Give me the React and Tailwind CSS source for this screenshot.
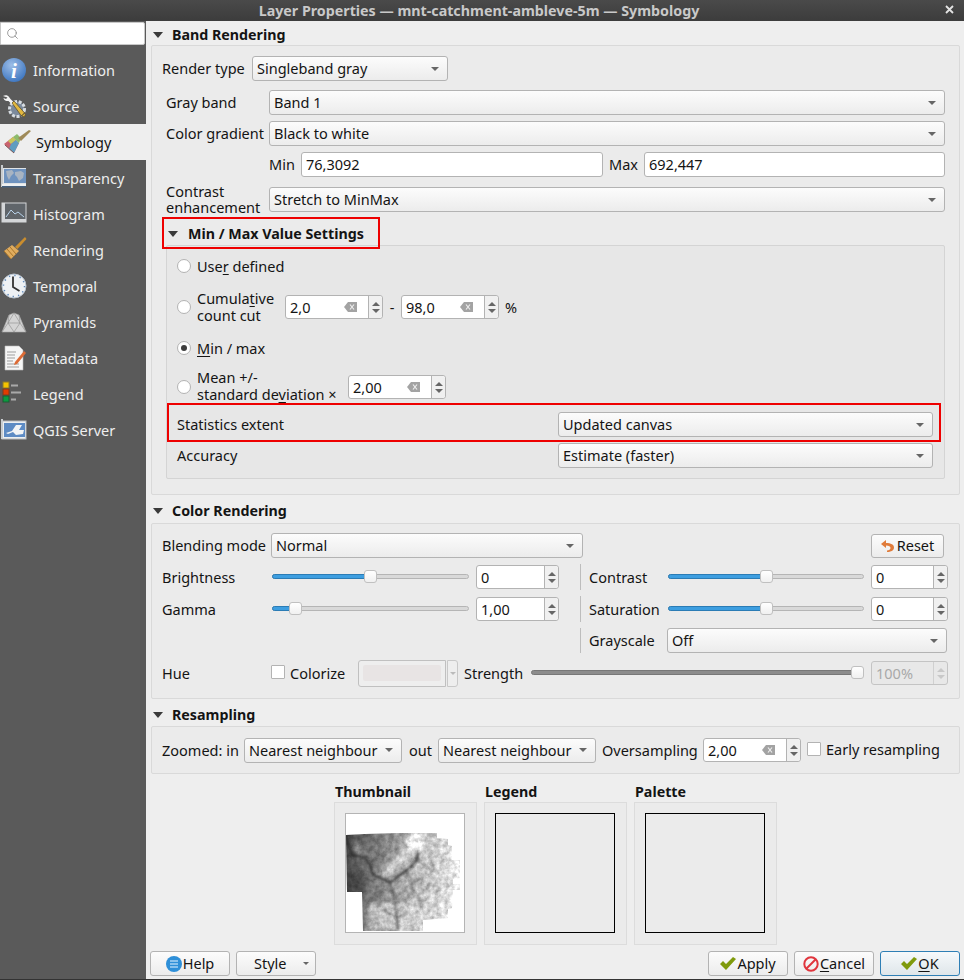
import { Search } from "lucide-react";

// ── Sidebar icons ─────────────────────────────────────
const InfoIcon = () => (
  <svg width="26" height="26" viewBox="0 0 26 26">
    <defs>
      <radialGradient id="infoBg" cx="0.4" cy="0.3" r="0.8">
        <stop offset="0" stopColor="#9dbde6" />
        <stop offset="1" stopColor="#3570bd" />
      </radialGradient>
    </defs>
    <circle cx="13" cy="13" r="12" fill="url(#infoBg)" />
    <text x="13" y="21" textAnchor="middle" fill="#fff" fontSize="21" fontWeight="700" fontStyle="italic" fontFamily="Liberation Serif, serif">i</text>
  </svg>
);

const SourceIcon = () => (
  <svg width="26" height="26" viewBox="0 0 26 26">
    <circle cx="16" cy="16" r="7.5" fill="#7c8a9c" stroke="#d8dde2" strokeWidth="3" strokeDasharray="3 1.6" />
    <path d="M2 3c2-1.500 5-1 6 1l1.500 2 4 4-2 2-4-4-2 0c-2-.5-3-2-3-3l2.500 1 1.500-1.500z" fill="#f4f4f4" />
    <path d="M11 10l2-2 11.500 13-1 3-3-1z" fill="#e3b83f" stroke="#5d5230" strokeWidth=".8" />
    <path d="M20.500 23l3-3" stroke="#333" strokeWidth="1" />
  </svg>
);

const SymbologyIcon = () => (
  <svg width="28" height="24" viewBox="0 0 28 24">
    <path d="M1 14l9-7 6 6-5 10z" fill="#c9626d" />
    <path d="M5 11l5-4 3 3-5 4z" fill="#c7c75a" />
    <path d="M8 14l5-4 3 3-5 10-5-4z" fill="#5f9dc0" />
    <path d="M10 7l4-3 4 4-2 5z" fill="#8dbb6d" />
    <path d="M15 8L26 0l2 1-10 10z" fill="#9f8a58" />
    <path d="M2 15l9 8" stroke="#7d5a5a" strokeWidth="1" />
  </svg>
);

const TransparencyIcon = () => (
  <svg width="26" height="26" viewBox="0 0 26 26">
    <rect x="1" y="3" width="24" height="18" fill="#dfe3e6" />
    <rect x="3" y="4" width="22" height="14" fill="#6f93bf" />
    <path d="M5 6l6-1 2 3-3 3-2 4-2-4zM14 7l6-1 3 2-1 5-4 3-2-4-2-2z" fill="#a8b4c2" />
    <rect x="0" y="0" width="2" height="22" fill="#c9cdd0" />
    <rect x="1" y="19" width="24" height="2" fill="#eef0f1" />
    <rect x="1" y="21" width="24" height="1.500" fill="#44607f" />
  </svg>
);

const HistogramIcon = () => (
  <svg width="26" height="26" viewBox="0 0 26 26">
    <rect x="1" y="2" width="24" height="19" fill="#60656a" stroke="#d4d6d8" />
    <rect x="1" y="2" width="3" height="19" fill="#d4d6d8" />
    <rect x="1" y="18" width="24" height="3" fill="#d4d6d8" />
    <path d="M5 16l5-7 4 4 3-2 6 5" fill="none" stroke="#b9d4ec" strokeWidth="1" />
  </svg>
);

const RenderingIcon = () => (
  <svg width="26" height="26" viewBox="0 0 26 26">
    <path d="M14 10L24 0l1.500 2-9 10z" fill="#c98d2e" />
    <path d="M3 14l8-6 7 6-8 8z" fill="#e0ac5e" />
    <path d="M3 14l7 8M6 12l7 8M9 10l6 7" stroke="#a8752a" strokeWidth="1" />
  </svg>
);

const TemporalIcon = () => (
  <svg width="26" height="26" viewBox="0 0 26 26">
    <circle cx="13" cy="13" r="12" fill="#eef1f4" stroke="#b9c4d0" />
    <circle cx="13" cy="13" r="10.500" fill="none" stroke="#5b86b8" strokeWidth="1.400" strokeDasharray="1.300 4.200" />
    <path d="M12 3.500v10.500l6.500 4" fill="none" stroke="#333" strokeWidth="1.800" />
  </svg>
);

const PyramidsIcon = () => (
  <svg width="26" height="26" viewBox="0 0 26 26">
    <path d="M1 23L8 6l5-2 5 2 7 17z" fill="#d4d4d4" stroke="#aaa" strokeWidth=".6" />
    <path d="M8 6l-1 8 6-10 6 10-1-8M1 23l6-9 6 9 6-9 6 9M7 14h12" fill="none" stroke="#8c8c8c" strokeWidth=".6" />
  </svg>
);

const MetadataIcon = () => (
  <svg width="26" height="26" viewBox="0 0 26 26">
    <path d="M4 1h14l4 4v20H4z" fill="#f6f6f6" stroke="#bbb" strokeWidth=".6" />
    <path d="M6 7h9M6 10h8M6 13h8M6 16h6M6 19h12M6 22h12" stroke="#9d9d9d" strokeWidth="1" />
    <path d="M14 17l9-11 2 2-9 11-3 1z" fill="#dd6b35" />
  </svg>
);

const LegendIcon = () => (
  <svg width="26" height="26" viewBox="0 0 26 26">
    <rect x="2" y="1" width="6" height="6" fill="#f5c400" stroke="#8c7a2a" />
    <rect x="2" y="8" width="6" height="6" fill="#e23c00" stroke="#7e3a1a" />
    <rect x="2" y="15" width="6" height="6" fill="#0a9b40" stroke="#1d5a33" />
    <path d="M10 4.500h7M10 11.500h10M10 18.500h5" stroke="#a9a9a9" strokeWidth="2" />
  </svg>
);

const ServerIcon = () => (
  <svg width="26" height="26" viewBox="0 0 26 26">
    <rect x="1" y="4" width="24" height="18" fill="#eceff1" stroke="#b7babd" />
    <rect x="3" y="6" width="21" height="14" fill="#5d8bc4" />
    <path d="M5 16l6-2 4-6h6l-3 5 5 0-1 4-7 1-3-3-5 2z" fill="#f2f4f6" />
    <rect x="0" y="2" width="2" height="20" fill="#c9cdd0" />
  </svg>
);

const navItems = [
  ["Information", InfoIcon],
  ["Source", SourceIcon],
  ["Symbology", SymbologyIcon],
  ["Transparency", TransparencyIcon],
  ["Histogram", HistogramIcon],
  ["Rendering", RenderingIcon],
  ["Temporal", TemporalIcon],
  ["Pyramids", PyramidsIcon],
  ["Metadata", MetadataIcon],
  ["Legend", LegendIcon],
  ["QGIS Server", ServerIcon],
];

// ── Small form widgets ────────────────────────────────
const Caret = () => (
  <span className="w-0 h-0 border-x-[4px] border-x-transparent border-t-[4px] border-t-[#666] shrink-0" />
);

const Combo = ({ value, className = "" }) => (
  <div className={`flex items-center justify-between h-[25px] pl-[4px] pr-[8px] border border-[#b3b3b3] rounded-[3px] bg-gradient-to-b from-[#fcfcfc] to-[#ececec] shrink-0 ${className}`}>
    <span className="whitespace-nowrap">{value}</span>
    <Caret />
  </div>
);

const TextInput = ({ value, className = "" }) => (
  <div className={`flex items-center h-[25px] pl-[4px] border border-[#b3b3b3] rounded-[3px] bg-white shrink-0 ${className}`}>
    {value}
  </div>
);

const ClearIcon = () => (
  <svg width="13" height="10" viewBox="0 0 13 10" className="shrink-0">
    <path d="M4 0h9v10H4L0 5z" fill="#a3a3a3" />
    <path d="M6 2.500l4 5M10 2.500l-4 5" stroke="#eee" strokeWidth="1.200" />
  </svg>
);

const Spin = ({ value, clear, disabled, className = "" }) => (
  <div className={`flex items-stretch h-[24px] border rounded-[3px] shrink-0 ${disabled ? "border-[#c4c4c4] bg-[#e8e8e8] text-[#a8a8a8]" : "border-[#b3b3b3] bg-white"} ${className}`}>
    <div className="flex-1 flex items-center justify-between pl-[4px] pr-[11px]">
      <span>{value}</span>
      {clear && <ClearIcon />}
    </div>
    <div className={`w-[14px] flex flex-col items-center justify-center gap-[3px] border-l rounded-r-[3px] ${disabled ? "border-[#d0d0d0]" : "border-[#b3b3b3] bg-[#f0f0f0]"}`}>
      <span className={`w-0 h-0 border-x-[4px] border-x-transparent border-b-[4px] ${disabled ? "border-b-[#c8c8c8]" : "border-b-[#666]"}`} />
      <span className={`w-0 h-0 border-x-[4px] border-x-transparent border-t-[4px] ${disabled ? "border-t-[#c8c8c8]" : "border-t-[#666]"}`} />
    </div>
  </div>
);

const Radio = ({ checked }) => (
  <span className="flex items-center justify-center w-[14px] h-[14px] rounded-full border border-[#b3b3b3] bg-white shrink-0">
    {checked && <span className="w-[6px] h-[6px] rounded-full bg-[#3d3d3d]" />}
  </span>
);

const Checkbox = ({ className = "" }) => (
  <span className={`block w-[14px] h-[14px] border border-[#b3b3b3] rounded-[1px] bg-white shrink-0 ${className}`} />
);

const Slider = ({ handle, width, dark }) => (
  <div className={`relative h-[5px] rounded-full border -translate-y-px shrink-0 ${dark ? "bg-[#8c8c8c] border-[#777]" : "bg-[#d9d9d9] border-[#b5b5b5]"} ${width}`}>
    {!dark && (
      <div
        className="absolute -left-px -top-px h-[5px] rounded-l-full bg-[#3d9ee0] border border-[#2b7cb5]"
        style={{ width: handle }}
      />
    )}
    <div
      className="absolute -top-[5px] w-[13px] h-[13px] rounded-[3px] border border-[#c0c0c0] bg-gradient-to-b from-white to-[#f0f0f0]"
      style={{ left: handle - 7 }}
    />
  </div>
);

const Section = ({ title, className = "" }) => (
  <div className={`flex items-center h-[23px] pl-[2px] gap-[9px] font-bold text-[14.25px] ${className}`}>
    <span className="w-0 h-0 border-x-[5px] border-x-transparent border-t-[6px] border-t-[#3a3a3a] shrink-0" />
    <span>{title}</span>
  </div>
);

const Divider = () => <div className="w-px self-stretch bg-[#bdbdbd] shrink-0" />;

const U = ({ children }) => <span className="underline underline-offset-2">{children}</span>;

// ── Thumbnail of the raster ───────────────────────────
const outline =
  "1,22 20,21 53,20 92,20 92,25 103,26 103,32 107,33 107,47 115,47 115,65 108,66 108,71 115,71 115,77 108,77 107,95 103,96 103,105 78,107 78,118 18,118 17,79 2,79";

const Thumbnail = () => (
  <svg width="120" height="120" viewBox="0 0 120 120" className="block bg-white">
    <defs>
      <linearGradient id="demBase" x1="0" x2="1" y1="0" y2="0.1">
        <stop offset="0" stopColor="#3c3c3c" />
        <stop offset="0.2" stopColor="#686868" />
        <stop offset="0.42" stopColor="#969696" />
        <stop offset="0.62" stopColor="#b8b8b8" />
        <stop offset="0.82" stopColor="#d2d2d2" />
        <stop offset="1" stopColor="#ececec" />
      </linearGradient>
      <clipPath id="demClip">
        <polygon points={outline} />
      </clipPath>
      <filter id="soft" x="-20%" y="-20%" width="140%" height="140%"><feGaussianBlur stdDeviation="2.4" /></filter>
      <filter id="mottle" x="0" y="0" width="100%" height="100%" colorInterpolationFilters="sRGB">
        <feTurbulence type="fractalNoise" baseFrequency="0.2" numOctaves="3" seed="4" result="n" />
        <feColorMatrix in="n" values="1 0 0 0 0  1 0 0 0 0  1 0 0 0 0  0 0 0 0 1" result="g" />
        <feComposite in="SourceGraphic" in2="g" operator="arithmetic" k1="0.6" k2="0.7" k3="0" k4="0" />
      </filter>
      <filter id="valley" x="-10%" y="-10%" width="120%" height="120%">
        <feTurbulence type="fractalNoise" baseFrequency="0.15" numOctaves="2" seed="9" result="w" />
        <feDisplacementMap in="SourceGraphic" in2="w" scale="3" result="d" />
        <feGaussianBlur in="d" stdDeviation="0.8" />
      </filter>
    </defs>
    <g clipPath="url(#demClip)">
      <g filter="url(#mottle)">
        <rect width="120" height="120" fill="url(#demBase)" />
        <rect x="0" y="60" width="20" height="22" fill="#333" opacity=".5" filter="url(#soft)" />
        <rect x="22" y="90" width="60" height="30" fill="#dcdcdc" opacity=".55" filter="url(#soft)" />
        <path d="M38 62l14-12 20-20" fill="none" stroke="#f2f2f2" strokeWidth="6" opacity=".85" filter="url(#soft)" />
        <path d="M30 92l12 12M66 90l-4 18M10 30l8 12" fill="none" stroke="#e6e6e6" strokeWidth="5" opacity=".6" filter="url(#soft)" />
        <ellipse cx="71" cy="29" rx="9" ry="8" fill="#fff" filter="url(#soft)" />
      </g>
      <g fill="none" stroke="#2a2a2a" filter="url(#valley)">
        <path d="M1 23l2 10 4 9 13 3 5 7 3 10 12 5 5 3 10-8 10-7 7-8 1-7" strokeWidth="2.200" opacity=".8" />
        <path d="M45 70l3 8 2 12 2 15 1 12" strokeWidth="1.800" opacity=".55" />
        <path d="M48 78l-10-1-8 3-7 13M55 80l13-10 9-5M50 90l10-3 8-8M52 105l-14-8M52 105l12-7M66 74l8 10 2 12M36 78l-2 16" strokeWidth="1.500" opacity=".42" />
        <path d="M13 23l2 12-6 10M33 22l2 15-6 12M46 22l-2 12-8 12M72 47l10 8 12 3M60 56l6 14 10 4M88 62l-6 14M84 40l4 14M98 70l-8 10" strokeWidth="1.300" opacity=".34" />
      </g>
    </g>
    <rect x=".5" y=".5" width="119" height="119" fill="none" stroke="#b4b4b4" />
  </svg>
);

const PreviewBox = ({ label, children }) => (
  <div className="flex flex-col w-[143px]">
    <div className="h-[28px] pt-[6px] flex items-center pl-px font-bold text-[14.25px]">{label}</div>
    <div className="h-[143px] p-[10px] border border-[#dcdcdc] bg-[#ebebeb]">{children}</div>
  </div>
);

const EmptyPreview = () => <div className="w-[120px] h-[120px] border border-black" />;

const FootButton = ({ children, ok }) => (
  <div className={`flex items-center justify-center w-[80px] h-[25px] rounded-[3px] border gap-px ${ok ? "border-[#2f7fb5] bg-gradient-to-b from-[#f6f9fb] to-[#dfe6ea]" : "border-[#b3b3b3] bg-gradient-to-b from-[#fcfcfc] to-[#ececec]"}`}>
    {children}
  </div>
);

const Check = () => (
  <svg width="16" height="13" viewBox="0 0 16 13" className="shrink-0">
    <path d="M0 7l3-3 3 3 7-7 3 2-10 11z" fill="#7f9a0c" />
  </svg>
);

// ── Page ──────────────────────────────────────────────
export default function App() {
  return (
    <div className="w-[964px] h-[980px] flex flex-col overflow-hidden bg-[#eeeeee] text-[#141414] text-[14.5px] leading-[17px] font-['Noto_Sans',sans-serif] border-b border-[#333]">
      {/* Title bar */}
      <div className="relative flex items-center justify-center h-[21px] shrink-0 bg-gradient-to-b from-[#4a4a4a] to-[#3c3c3c] text-[#c9c9c9] font-bold text-[14.25px]">
        <span className="-translate-x-[3px]">Layer Properties — mnt-catchment-ambleve-5m — Symbology</span>
        <svg width="9" height="9" viewBox="0 0 9 9" className="absolute right-[10px] top-[5px]">
          <path d="M1 1l7 7M8 1l-7 7" stroke="#e4e4e4" strokeWidth="1.800" />
        </svg>
      </div>

      <div className="flex flex-1 min-h-0">
        {/* Sidebar */}
        <div className="w-[146px] shrink-0 bg-[#5a5a5a] text-[#eeeeee] pt-px">
          <div className="flex items-center h-[23px] w-[145px] pl-[5px] bg-white border border-[#c8c8c8] rounded-r-[2px] text-[#888]">
            <Search size={13} strokeWidth={1.5} />
          </div>
          <div className="mt-[7px]">
            {navItems.map(([name, Icon]) =>
              name === "Symbology" ? (
                <div key={name} className="flex items-center h-[36px] pl-[3px] gap-[5px] bg-[#eeeeee] text-[#141414]">
                  <Icon />
                  <span>{name}</span>
                </div>
              ) : (
                <div key={name} className="flex items-center h-[36px] pl-px gap-[6px]">
                  <Icon />
                  <span>{name}</span>
                </div>
              )
            )}
          </div>
        </div>

        {/* Main panel */}
        <div className="flex-1 flex flex-col pl-[5px] pr-[4px] pt-px min-w-0">
          <Section title="Band Rendering" className="translate-y-px" />
          <div className="flex flex-col h-[450px] pt-[10px] border border-[#d9d9d9] rounded-[2px] bg-[#ebebeb]">
            <div className="flex items-center pl-[10px] gap-[5px]">
              <span className="w-[85px]">Render type</span>
              <Combo value="Singleband gray" className="w-[196px]" />
            </div>
            <div className="flex items-center pl-[14px] mt-[9px]">
              <span className="w-[103px]">Gray band</span>
              <Combo value="Band 1" className="w-[676px]" />
            </div>
            <div className="flex items-center pl-[14px] mt-[6px]">
              <span className="w-[103px] whitespace-nowrap">Color gradient</span>
              <Combo value="Black to white" className="w-[676px]" />
            </div>
            <div className="flex items-center pl-[117px] mt-[6px]">
              <span className="w-[32px]">Min</span>
              <TextInput value="76,3092" className="w-[302px]" />
              <span className="w-[41px] pl-[6px]">Max</span>
              <TextInput value="692,447" className="w-[301px]" />
            </div>
            <div className="flex items-center h-[25px] pl-[14px] mt-[10px]">
              <span className="w-[103px] leading-[16px] -translate-y-px">Contrast<br />enhancement</span>
              <Combo value="Stretch to MinMax" className="w-[676px]" />
            </div>

            {/* Min / Max settings */}
            <div className="relative mx-[14px] mt-[10px]">
              <Section title="Min / Max Value Settings" className="gap-[10px]" />
              <div className="absolute z-10 -left-[4px] -top-[5px] w-[218px] h-[32px] border-2 border-[#ee0000] pointer-events-none" />
              <div className="relative flex flex-col h-[234px] pt-[8px] border border-[#d4d4d4] rounded-[2px] bg-[#e7e7e7]">
                <div className="flex items-center h-[24px] pl-[10px] gap-[6px]">
                  <Radio />
                  <span>Use<U>r</U> defined</span>
                </div>
                <div className="flex items-center h-[24px] pl-[10px] mt-[17px]">
                  <Radio />
                  <span className="w-[94px] pl-[6px] leading-[17px]">Cumula<U>t</U>ive<br />count cut</span>
                  <Spin value="2,0" clear className="w-[98px]" />
                  <span className="w-[18px] text-center">-</span>
                  <Spin value="98,0" clear className="w-[98px]" />
                  <span className="pl-[6px]">%</span>
                </div>
                <div className="flex items-center h-[24px] pl-[10px] mt-[17px] gap-[6px]">
                  <Radio checked />
                  <span><U>M</U>in / max</span>
                </div>
                <div className="flex items-center h-[24px] pl-[10px] mt-[15px]">
                  <Radio />
                  <span className="w-[157px] pl-[6px] whitespace-nowrap leading-[17px] -translate-y-px">Mean +/-<br />standard de<U>v</U>iation ×</span>
                  <Spin value="2,00" clear className="w-[98px]" />
                </div>
                <div className="flex items-center pl-[10px] mt-[13px]">
                  <span className="w-[381px]">Statistics extent</span>
                  <Combo value="Updated canvas" className="w-[375px]" />
                </div>
                <div className="flex items-center pl-[10px] mt-[6px]">
                  <span className="w-[381px]">Accuracy</span>
                  <Combo value="Estimate (faster)" className="w-[375px]" />
                </div>
                <div className="absolute left-0 top-[157px] w-[774px] h-[39px] border-2 border-[#ee0000] pointer-events-none" />
              </div>
            </div>
          </div>

          {/* Color rendering */}
          <div className="mt-[5px]"><Section title="Color Rendering" className="-translate-y-px" /></div>
          <div className="flex flex-col h-[176px] pt-[9px] pl-[10px] border border-[#d9d9d9] rounded-[2px] bg-[#ebebeb]">
            <div className="flex items-center h-[25px]">
              <span className="w-[109px]">Blending mode</span>
              <Combo value="Normal" className="w-[312px]" />
              <div className="flex items-center justify-center gap-[3px] w-[73px] h-[24px] ml-[288px] border border-[#b3b3b3] rounded-[3px] bg-gradient-to-b from-[#fcfcfc] to-[#ececec]">
                <svg width="13" height="12" viewBox="0 0 13 12" className="shrink-0">
                  <path d="M5 0L0 4l5 4V5.500c3 0 4.500 1 4.500 2.500S8 10.500 6 10.500V12c4 0 7-1.500 7-4.500S10 3 5 3z" fill="#e07b3a" />
                </svg>
                <span>Reset</span>
              </div>
            </div>
            <div className="flex items-center h-[24px] mt-[7px]">
              <span className="w-[110px]">Brightness</span>
              <Slider handle={98} width="w-[197px]" />
              <Spin value="0" className="w-[83px] ml-[7px]" />
              <div className="h-[26px] flex ml-[21px] mr-[8px]"><Divider /></div>
              <span className="w-[79px]">Contrast</span>
              <Slider handle={98} width="w-[196px]" />
              <Spin value="0" className="w-[77px] ml-[7px]" />
            </div>
            <div className="flex items-center h-[24px] mt-[8px]">
              <span className="w-[110px]">Gamma</span>
              <Slider handle={23} width="w-[197px]" />
              <Spin value="1,00" className="w-[83px] ml-[7px]" />
              <div className="h-[26px] flex ml-[21px] mr-[8px]"><Divider /></div>
              <span className="w-[79px] whitespace-nowrap">Saturation</span>
              <Slider handle={98} width="w-[196px]" />
              <Spin value="0" className="w-[77px] ml-[7px]" />
            </div>
            <div className="flex items-center h-[25px] mt-[7px] pl-[418px]">
              <Divider />
              <span className="w-[78px] ml-[8px]">Grayscale</span>
              <Combo value="Off" className="w-[280px]" />
            </div>
            <div className="flex items-center h-[26px] mt-[7px]">
              <span className="w-[109px]">Hue</span>
              <Checkbox className="-translate-y-px" />
              <span className="w-[73px] pl-[5px]">Colorize</span>
              <div className="flex items-center justify-center w-[88px] h-[27px] border border-[#c0c0c0] rounded-l-[3px] bg-[#eeeeee]">
                <div className="w-[78px] h-[16px] rounded-[2px] bg-[#e8e4e4]" />
              </div>
              <div className="flex items-center justify-center w-[11px] h-[27px] ml-px border border-[#c8c8c8] rounded-r-[3px] bg-[#eeeeee]">
                <span className="w-0 h-0 border-x-[3px] border-x-transparent border-t-[3px] border-t-[#bbb]" />
              </div>
              <span className="w-[73px] pl-[6px]">Strength</span>
              <Slider handle={326} width="w-[333px]" dark />
              <Spin value="100%" disabled className="w-[77px] ml-[7px]" />
            </div>
          </div>

          {/* Resampling */}
          <div className="mt-[4px]"><Section title="Resampling" /></div>
          <div className="flex items-center h-[48px] pl-[10px] border border-[#d9d9d9] rounded-[2px] bg-[#ebebeb]">
            <span className="w-[82px] whitespace-nowrap">Zoomed: in</span>
            <Combo value="Nearest neighbour" className="w-[158px]" />
            <span className="w-[36px] pl-[7px]">out</span>
            <Combo value="Nearest neighbour" className="w-[158px]" />
            <span className="w-[107px] pl-[6px]">Oversampling</span>
            <Spin value="2,00" clear className="w-[98px]" />
            <Checkbox className="ml-[6px] -translate-y-px" />
            <span className="pl-[5px] whitespace-nowrap -translate-y-px">Early resampling</span>
          </div>

          {/* Previews */}
          <div className="flex gap-[7px] pl-[183px]">
            <PreviewBox label="Thumbnail"><Thumbnail /></PreviewBox>
            <PreviewBox label="Legend"><EmptyPreview /></PreviewBox>
            <PreviewBox label="Palette"><EmptyPreview /></PreviewBox>
          </div>

          {/* Buttons */}
          <div className="flex items-center mt-[6px] -ml-px gap-[6px]">
            <FootButton>
              <svg width="16" height="16" viewBox="0 0 16 16" className="shrink-0">
                <circle cx="8" cy="8" r="8" fill="#2e8fd8" />
                <path d="M4 5h8M4 8h8M4 11h8" stroke="#a9d3f2" strokeWidth="1.500" />
              </svg>
              <span>Help</span>
            </FootButton>
            <div className="flex items-center justify-between w-[80px] h-[25px] pl-[17px] pr-[6px] rounded-[3px] border border-[#b3b3b3] bg-gradient-to-b from-[#fcfcfc] to-[#ececec]">
              <span>Style</span>
              <span className="w-0 h-0 border-x-[3px] border-x-transparent border-t-[3px] border-t-[#666] shrink-0" />
            </div>
            <div className="flex-1" />
            <FootButton><Check /><span>Apply</span></FootButton>
            <FootButton>
              <svg width="16" height="16" viewBox="0 0 16 16" className="shrink-0">
                <circle cx="8" cy="8" r="6.700" fill="none" stroke="#e0353d" strokeWidth="2" />
                <path d="M3.500 12.500l9-9" stroke="#e0353d" strokeWidth="2" />
              </svg>
              <span><U>C</U>ancel</span>
            </FootButton>
            <FootButton ok><Check /><span><U>O</U>K</span></FootButton>
          </div>
        </div>
      </div>
    </div>
  );
}
